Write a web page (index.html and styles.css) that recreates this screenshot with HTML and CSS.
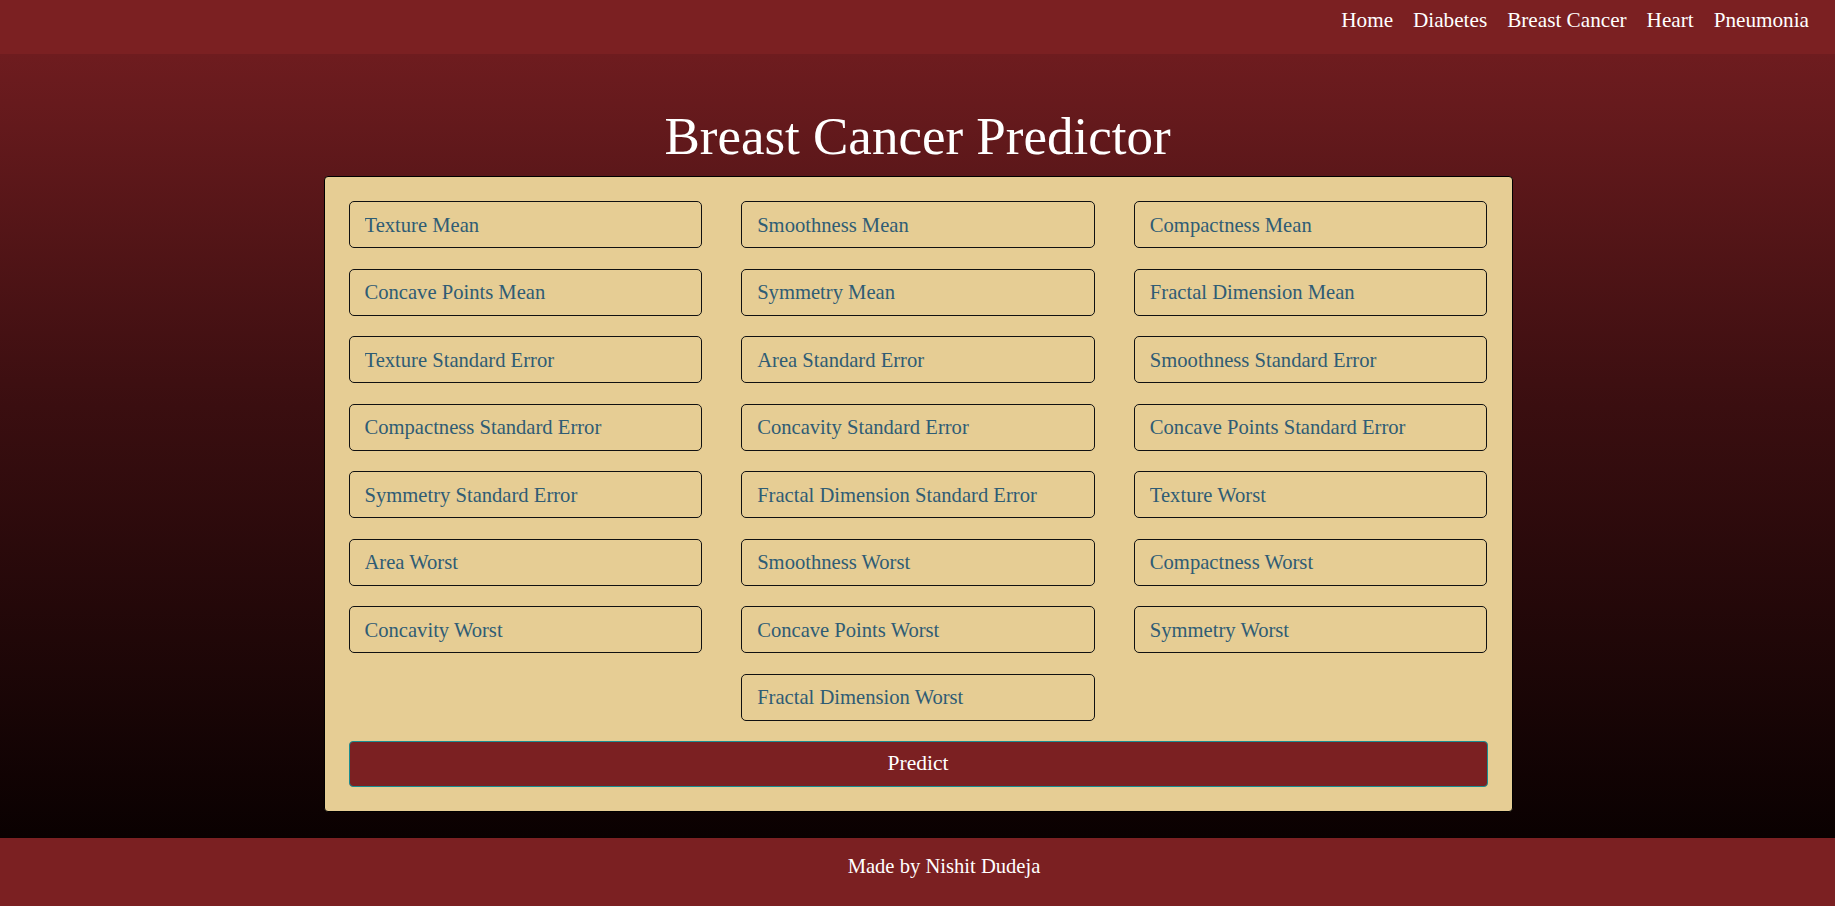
FILE: index.html
```html
<!DOCTYPE html>
<html lang="en">
<head>
<meta charset="utf-8">
<title>Breast Cancer Predictor</title>
<link rel="stylesheet" href="styles.css">
</head>
<body>
<header class="navbar">
  <nav class="nav-links">
    <a class="nav-link" href="#">Home</a>
    <a class="nav-link" href="#">Diabetes</a>
    <a class="nav-link" href="#">Breast Cancer</a>
    <a class="nav-link" href="#">Heart</a>
    <a class="nav-link" href="#">Pneumonia</a>
  </nav>
</header>
<main class="main">
  <h1 class="title">Breast Cancer Predictor</h1>
  <form class="card">
    <div class="grid">
      <input class="field" type="text" placeholder="Texture Mean">
      <input class="field" type="text" placeholder="Smoothness Mean">
      <input class="field" type="text" placeholder="Compactness Mean">
      <input class="field" type="text" placeholder="Concave Points Mean">
      <input class="field" type="text" placeholder="Symmetry Mean">
      <input class="field" type="text" placeholder="Fractal Dimension Mean">
      <input class="field" type="text" placeholder="Texture Standard Error">
      <input class="field" type="text" placeholder="Area Standard Error">
      <input class="field" type="text" placeholder="Smoothness Standard Error">
      <input class="field" type="text" placeholder="Compactness Standard Error">
      <input class="field" type="text" placeholder="Concavity Standard Error">
      <input class="field" type="text" placeholder="Concave Points Standard Error">
      <input class="field" type="text" placeholder="Symmetry Standard Error">
      <input class="field" type="text" placeholder="Fractal Dimension Standard Error">
      <input class="field" type="text" placeholder="Texture Worst">
      <input class="field" type="text" placeholder="Area Worst">
      <input class="field" type="text" placeholder="Smoothness Worst">
      <input class="field" type="text" placeholder="Compactness Worst">
      <input class="field" type="text" placeholder="Concavity Worst">
      <input class="field" type="text" placeholder="Concave Points Worst">
      <input class="field" type="text" placeholder="Symmetry Worst">
      <input class="field field-center" type="text" placeholder="Fractal Dimension Worst">
    </div>
    <button class="predict" type="button">Predict</button>
  </form>
</main>
<footer class="footer">Made by Nishit Dudeja</footer>
</body>
</html>
```
FILE: styles.css
```css
* { box-sizing: border-box; }

html, body {
  margin: 0;
  padding: 0;
}

body {
  font-family: "Liberation Serif", "Times New Roman", serif;
  background: #0a0101;
  color: #fff;
  width: 1835px;
  height: 906px;
  overflow: hidden;
}

.navbar {
  height: 54px;
  background: #7b2022;
  padding: 8px 26px 0 0;
}

.nav-links {
  display: flex;
  justify-content: flex-end;
  gap: 20px;
}

.nav-link {
  color: #fff;
  text-decoration: none;
  font-size: 21.2px;
  line-height: 24px;
}

.main {
  height: 784px;
  display: flex;
  flex-direction: column;
  align-items: center;
  background: linear-gradient(to bottom, #6e1c1f 0%, #3a0e10 45%, #0a0101 100%);
}

.title {
  margin: 50px 0 7.5px;
  font-size: 53px;
  line-height: 64px;
  font-weight: normal;
  color: #fff;
}

.card {
  width: 1189px;
  margin-left: 1px;
  background: #e6cd94;
  border: 1px solid #000;
  border-radius: 4px;
  padding: 24.5px 24px 24px;
  display: flex;
  flex-direction: column;
  gap: 20px;
}

.grid {
  display: grid;
  grid-template-columns: repeat(3, 1fr);
  column-gap: 39px;
  row-gap: 20.57px;
}

.field {
  height: 47px;
  margin: 0;
  padding: 1px 15px 0;
  background: transparent;
  border: 1px solid #111;
  border-radius: 5px;
  font-family: "Liberation Serif", "Times New Roman", serif;
  font-size: 20.6px;
  color: #2f5c74;
  outline: none;
}

.field::placeholder {
  color: #2f5c74;
  opacity: 1;
}

.field-center {
  grid-column: 2;
}

.predict {
  height: 46px;
  margin: 0;
  background: #7b2022;
  border: 1px solid #1a8d92;
  border-radius: 4px;
  color: #fff;
  font-family: "Liberation Serif", "Times New Roman", serif;
  font-size: 21.5px;
  cursor: pointer;
}

.footer {
  height: 68px;
  background: #7b2022;
  padding: 16px 0 0 53px;
  text-align: center;
  font-size: 20.6px;
  line-height: 24px;
  color: #fff;
}
```
